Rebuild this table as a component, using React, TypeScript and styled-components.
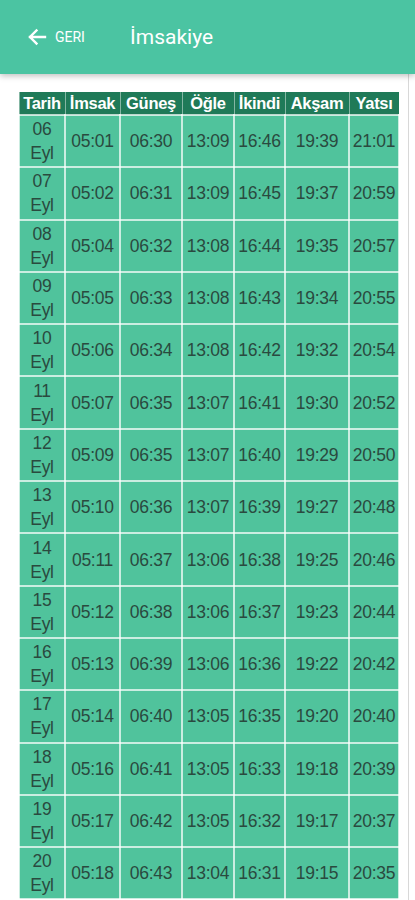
import React from "react";
import styled, { createGlobalStyle } from "styled-components";

const Global = createGlobalStyle`
  html, body { margin: 0; padding: 0; background: #fff; }
  body { font-family: "Liberation Sans", Arial, sans-serif; }
`;

const Page = styled.div`
  width: 415px;
  min-height: 900px;
  display: flex;
  flex-direction: column;
`;

const Bar = styled.header`
  height: 74px;
  background: #4bc4a2;
  display: flex;
  align-items: center;
  padding-left: 27px;
  box-shadow: 0 2px 6px rgba(0, 0, 0, 0.25);
  position: relative;
  z-index: 1;
  flex-shrink: 0;
`;

const Back = styled.button`
  display: flex;
  align-items: center;
  gap: 8px;
  background: none;
  border: none;
  padding: 0;
  color: #fff;
  font-family: Roboto, "Liberation Sans", sans-serif;
  font-size: 14px;
  letter-spacing: 0;
  width: 103px;
`;

const Title = styled.h1`
  margin: 0;
  color: #fff;
  font-family: Roboto, "Liberation Sans", sans-serif;
  font-weight: 400;
  font-size: 21px;
`;

const Content = styled.main`
  width: 409px;
  border-right: 1px solid #d8d8d8;
  padding: 18px 0 0 18px;
  box-sizing: border-box;
  flex: 1;
`;

const Table = styled.table`
  border-collapse: collapse;
  table-layout: fixed;
  width: 380px;
  font-family: "Liberation Sans", Arial, sans-serif;
`;

const Th = styled.th`
  background: #1f7a58;
  color: #fff;
  font-weight: 700;
  font-size: 16.5px;
  height: 22px;
  padding: 0;
  text-align: center;
  white-space: nowrap;
  border: 1.5px solid rgba(255, 255, 255, 0.45);
  border-top: none;
  letter-spacing: -0.3px;
`;

const Td = styled.td`
  background: #50c39c;
  color: #2a4a3f;
  font-size: 17.5px;
  height: 50.3px;
  padding: 0;
  text-align: center;
  line-height: 24px;
  border: 2px solid rgba(255, 255, 255, 0.7);
  letter-spacing: -0.3px;
  white-space: nowrap;
`;

const cols = [46, 55, 62, 52, 51, 64, 50];
const heads = ["Tarih", "İmsak", "Güneş", "Öğle", "İkindi", "Akşam", "Yatsı"];

const rows: [string, string[]][] = [
  ["06", ["05:01", "06:30", "13:09", "16:46", "19:39", "21:01"]],
  ["07", ["05:02", "06:31", "13:09", "16:45", "19:37", "20:59"]],
  ["08", ["05:04", "06:32", "13:08", "16:44", "19:35", "20:57"]],
  ["09", ["05:05", "06:33", "13:08", "16:43", "19:34", "20:55"]],
  ["10", ["05:06", "06:34", "13:08", "16:42", "19:32", "20:54"]],
  ["11", ["05:07", "06:35", "13:07", "16:41", "19:30", "20:52"]],
  ["12", ["05:09", "06:35", "13:07", "16:40", "19:29", "20:50"]],
  ["13", ["05:10", "06:36", "13:07", "16:39", "19:27", "20:48"]],
  ["14", ["05:11", "06:37", "13:06", "16:38", "19:25", "20:46"]],
  ["15", ["05:12", "06:38", "13:06", "16:37", "19:23", "20:44"]],
  ["16", ["05:13", "06:39", "13:06", "16:36", "19:22", "20:42"]],
  ["17", ["05:14", "06:40", "13:05", "16:35", "19:20", "20:40"]],
  ["18", ["05:16", "06:41", "13:05", "16:33", "19:18", "20:39"]],
  ["19", ["05:17", "06:42", "13:05", "16:32", "19:17", "20:37"]],
  ["20", ["05:18", "06:43", "13:04", "16:31", "19:15", "20:35"]],
];

export default function App() {
  return (
    <Page>
      <Global />
      <Bar>
        <Back>
          <svg width="20" height="18" viewBox="0 0 20 18" fill="none" stroke="#fff" strokeWidth="2.4" strokeLinecap="square">
            <path d="M18 9H3M9.5 2.5L3 9l6.5 6.5" />
          </svg>
          GERI
        </Back>
        <Title>İmsakiye</Title>
      </Bar>
      <Content>
        <Table>
          <colgroup>
            {cols.map((w, i) => (
              <col key={i} style={{ width: w }} />
            ))}
          </colgroup>
          <thead>
            <tr>
              {heads.map((h) => (
                <Th key={h}>{h}</Th>
              ))}
            </tr>
          </thead>
          <tbody>
            {rows.map(([d, times]) => (
              <tr key={d}>
                <Td>
                  {d}
                  <br />
                  Eyl
                </Td>
                {times.map((t, i) => (
                  <Td key={i}>{t}</Td>
                ))}
              </tr>
            ))}
          </tbody>
        </Table>
      </Content>
    </Page>
  );
}
